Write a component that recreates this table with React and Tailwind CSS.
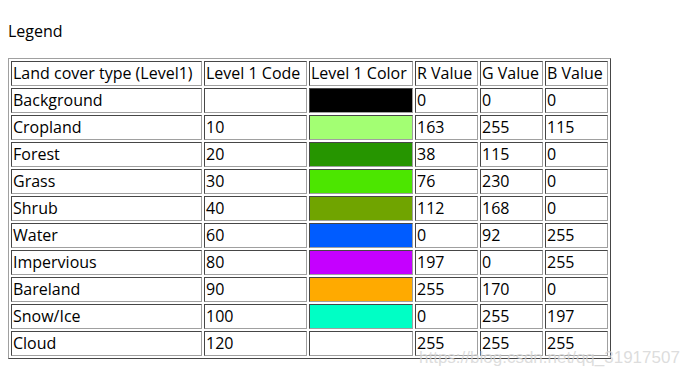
import React from 'react';

const rows = [
  { name: 'Background', code: '', color: '#000000', r: 0, g: 0, b: 0 },
  { name: 'Cropland', code: '10', color: '#a3ff73', r: 163, g: 255, b: 115 },
  { name: 'Forest', code: '20', color: '#269500', r: 38, g: 115, b: 0 },
  { name: 'Grass', code: '30', color: '#4ce600', r: 76, g: 230, b: 0 },
  { name: 'Shrub', code: '40', color: '#70a400', r: 112, g: 168, b: 0 },
  { name: 'Water', code: '60', color: '#005cff', r: 0, g: 92, b: 255 },
  { name: 'Impervious', code: '80', color: '#c500ff', r: 197, g: 0, b: 255 },
  { name: 'Bareland', code: '90', color: '#ffaa00', r: 255, g: 170, b: 0 },
  { name: 'Snow/Ice', code: '100', color: '#00ffc5', r: 0, g: 255, b: 197 },
  { name: 'Cloud', code: '120', color: '#ffffff', r: 255, g: 255, b: 255 },
];

// inset look of an old border="1" table cell
const cell =
  'h-[25px] p-px border border-t-[#464646] border-l-[#464646] border-b-[#a0a0a0] border-r-[#a0a0a0] whitespace-nowrap overflow-hidden text-left font-normal';

const App = () => {
  return (
    <div
      className="relative w-[681px] h-[376px] bg-white text-black text-[16px] leading-[21px] overflow-hidden"
      style={{ fontFamily: '"Open Sans", "Noto Sans", sans-serif' }}
    >
      <div className="pt-[21px] px-2">
        <p className="h-[21px]">Legend</p>

        {/* legend table */}
        <table className="mt-4 table-fixed border-separate border-spacing-[2px] border border-t-[#a0a0a0] border-l-[#a0a0a0] border-b-[#464646] border-r-[#464646]">
          <thead>
            <tr>
              <th className={`${cell} w-[191px]`}>Land cover type (Level1)</th>
              <th className={`${cell} w-[103px]`}>Level 1 Code</th>
              <th className={`${cell} w-[104px]`}>Level 1 Color</th>
              <th className={`${cell} w-[63px]`}>R Value</th>
              <th className={`${cell} w-[63px]`}>G Value</th>
              <th className={`${cell} w-[63px]`}>B Value</th>
            </tr>
          </thead>
          <tbody>
            {rows.map((row) => (
              <tr key={row.name}>
                <td className={cell}>{row.name}</td>
                <td className={cell}>{row.code}</td>
                <td className={cell} style={{ backgroundColor: row.color }}></td>
                <td className={cell}>{row.r}</td>
                <td className={cell}>{row.g}</td>
                <td className={cell}>{row.b}</td>
              </tr>
            ))}
          </tbody>
        </table>
      </div>

      {/* watermark */}
      <div
        className="absolute left-[419px] top-[348px] text-[17px] leading-[20px] text-[#d4d4d4]/80 whitespace-nowrap"
        style={{ fontFamily: '"Liberation Sans", Arial, sans-serif' }}
      >
        https://blog.csdn.net/qq_31917507
      </div>
    </div>
  );
};

export default App;
